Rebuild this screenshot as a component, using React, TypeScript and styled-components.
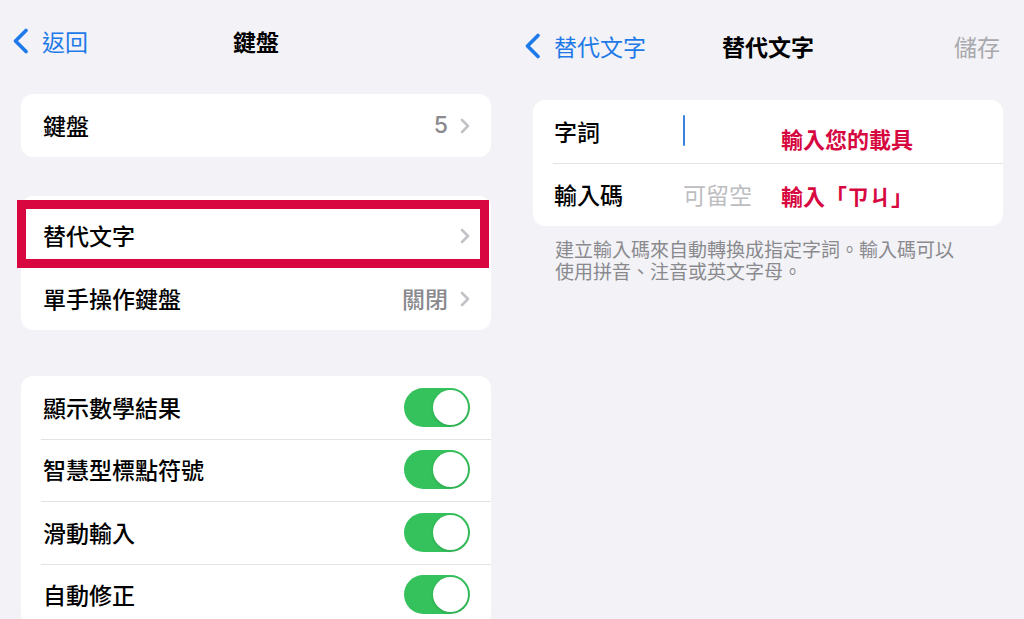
import React from "react";
import styled, { createGlobalStyle } from "styled-components";

const GlobalStyle = createGlobalStyle`
  html, body {
    margin: 0;
    padding: 0;
    background: #f2f2f7;
  }
  body {
    font-family: "Noto Sans CJK TC", "Noto Sans", sans-serif;
    color: #000;
    -webkit-font-smoothing: antialiased;
  }
`;

const Screen = styled.div`
  display: flex;
  width: 1024px;
  height: 619px;
  overflow: hidden;
  background: #f2f2f7;
`;

const Pane = styled.section`
  width: 512px;
  display: flex;
  flex-direction: column;

  & > * {
    flex-shrink: 0;
  }
`;

const NavBar = styled.header<{ $top: number }>`
  display: grid;
  grid-template-columns: 1fr auto 1fr;
  align-items: center;
  height: 42px;
  padding: ${(p) => p.$top}px 12px 0;
`;

const BackButton = styled.div`
  display: flex;
  align-items: center;
  gap: 13px;
  color: #1d7ae8;
  font-size: 23px;
  line-height: 1;
  justify-self: start;
`;

const NavTitle = styled.h1`
  margin: 0;
  font-size: 23px;
  font-weight: 700;
  line-height: 1;
`;

const NavAction = styled.div`
  justify-self: end;
  margin-right: 12px;
  color: #a9a9ad;
  font-size: 23px;
  line-height: 1;
`;

const Card = styled.div<{ $top: number; $padTop?: number }>`
  position: relative;
  margin: ${(p) => p.$top}px 21px 0;
  padding-top: ${(p) => p.$padTop ?? 0}px;
  background: #fff;
  border-radius: 12px;
`;

const Row = styled.div<{ $height?: number; $divider?: boolean }>`
  position: relative;
  display: flex;
  align-items: center;
  height: ${(p) => p.$height ?? 63}px;
  padding: 0 21px 0 22px;
  font-size: 23px;
  font-weight: 500;

  &::before {
    content: "";
    display: ${(p) => (p.$divider ? "block" : "none")};
    position: absolute;
    top: 0;
    left: 20px;
    right: 0;
    height: 1px;
    background: #e3e3e6;
  }
`;

const Label = styled.span`
  flex: 1;
  line-height: 1;
`;

const Detail = styled.span`
  display: flex;
  align-items: center;
  gap: 12px;
  color: #8a8a8e;
  font-size: 23px;
  line-height: 1;
`;

const Number = styled.span`
  font-family: "Inter", "Noto Sans", sans-serif;
  font-weight: 500;
`;

const Highlight = styled.div`
  position: absolute;
  left: -4px;
  top: 4px;
  width: 472px;
  height: 68px;
  box-sizing: border-box;
  border: 9px solid #d9073f;
  pointer-events: none;
`;

const Toggle = styled.div`
  position: relative;
  width: 66px;
  height: 39px;
  border-radius: 20px;
  background: #35c15c;

  &::after {
    content: "";
    position: absolute;
    right: 2px;
    top: 2px;
    width: 35px;
    height: 35px;
    border-radius: 50%;
    background: #fff;
    box-shadow: 0 1px 3px rgba(0, 0, 0, 0.15);
  }
`;

const FormRow = styled.div<{ $divider?: boolean }>`
  position: relative;
  display: grid;
  grid-template-columns: 129px 98px 1fr;
  align-items: center;
  height: 63px;
  padding: 0 21px;
  font-size: 23px;
  font-weight: 500;
  line-height: 1;

  &::before {
    content: "";
    display: ${(p) => (p.$divider ? "block" : "none")};
    position: absolute;
    top: 0;
    left: 20px;
    right: 0;
    height: 1px;
    background: #e3e3e6;
  }
`;

const Caret = styled.span`
  display: block;
  width: 2px;
  height: 31px;
  border-radius: 1px;
  background: #3b82e0;
  margin-top: -2px;
`;

const Placeholder = styled.span`
  color: #bdbdc1;
  font-weight: 400;
`;

const Note = styled.span<{ $shift?: number }>`
  color: #d6083f;
  font-size: 22px;
  font-weight: 700;
  margin-top: ${(p) => p.$shift ?? 0}px;
`;

const Footer = styled.p`
  width: 410px;
  margin: 12px 0 0 43px;
  color: #8a8a8e;
  font-size: 19px;
  line-height: 22px;
`;

const BackChevron = () => (
  <svg width="17" height="26" viewBox="0 0 17 26" fill="none">
    <path
      d="M14 2.5 L3.5 13 L14 23.5"
      stroke="#1d7ae8"
      strokeWidth="3.6"
      strokeLinecap="round"
      strokeLinejoin="round"
    />
  </svg>
);

const Disclosure = () => (
  <svg width="10" height="16" viewBox="0 0 10 16" fill="none">
    <path
      d="M2 2 L8 8 L2 14"
      stroke="#c3c3c7"
      strokeWidth="2.6"
      strokeLinecap="round"
      strokeLinejoin="round"
    />
  </svg>
);

const toggles = ["顯示數學結果", "智慧型標點符號", "滑動輸入", "自動修正"];

export default function App() {
  return (
    <>
      <GlobalStyle />
      <Screen>
        <Pane>
          <NavBar $top={20}>
            <BackButton>
              <BackChevron />
              <span>返回</span>
            </BackButton>
            <NavTitle>鍵盤</NavTitle>
            <span />
          </NavBar>

          <Card $top={32}>
            <Row>
              <Label>鍵盤</Label>
              <Detail>
                <Number>5</Number>
                <Disclosure />
              </Detail>
            </Row>
          </Card>

          <Card $top={39} $padTop={8}>
            <Row>
              <Label>替代文字</Label>
              <Detail>
                <Disclosure />
              </Detail>
            </Row>
            <Row>
              <Label>單手操作鍵盤</Label>
              <Detail>
                <span>關閉</span>
                <Disclosure />
              </Detail>
            </Row>
            <Highlight />
          </Card>

          <Card $top={46}>
            {toggles.map((t, i) => (
              <Row key={t} $height={62.5} $divider={i > 0}>
                <Label>{t}</Label>
                <Toggle />
              </Row>
            ))}
          </Card>
        </Pane>

        <Pane>
          <NavBar $top={25}>
            <BackButton>
              <BackChevron />
              <span>替代文字</span>
            </BackButton>
            <NavTitle>替代文字</NavTitle>
            <NavAction>儲存</NavAction>
          </NavBar>

          <Card $top={33}>
            <FormRow>
              <span>字詞</span>
              <Caret />
              <Note $shift={12}>輸入您的載具</Note>
            </FormRow>
            <FormRow $divider>
              <span>輸入碼</span>
              <Placeholder>可留空</Placeholder>
              <Note>輸入「ㄗㄐ」</Note>
            </FormRow>
          </Card>

          <Footer>
            建立輸入碼來自動轉換成指定字詞。輸入碼可以使用拼音、注音或英文字母。
          </Footer>
        </Pane>
      </Screen>
    </>
  );
}
